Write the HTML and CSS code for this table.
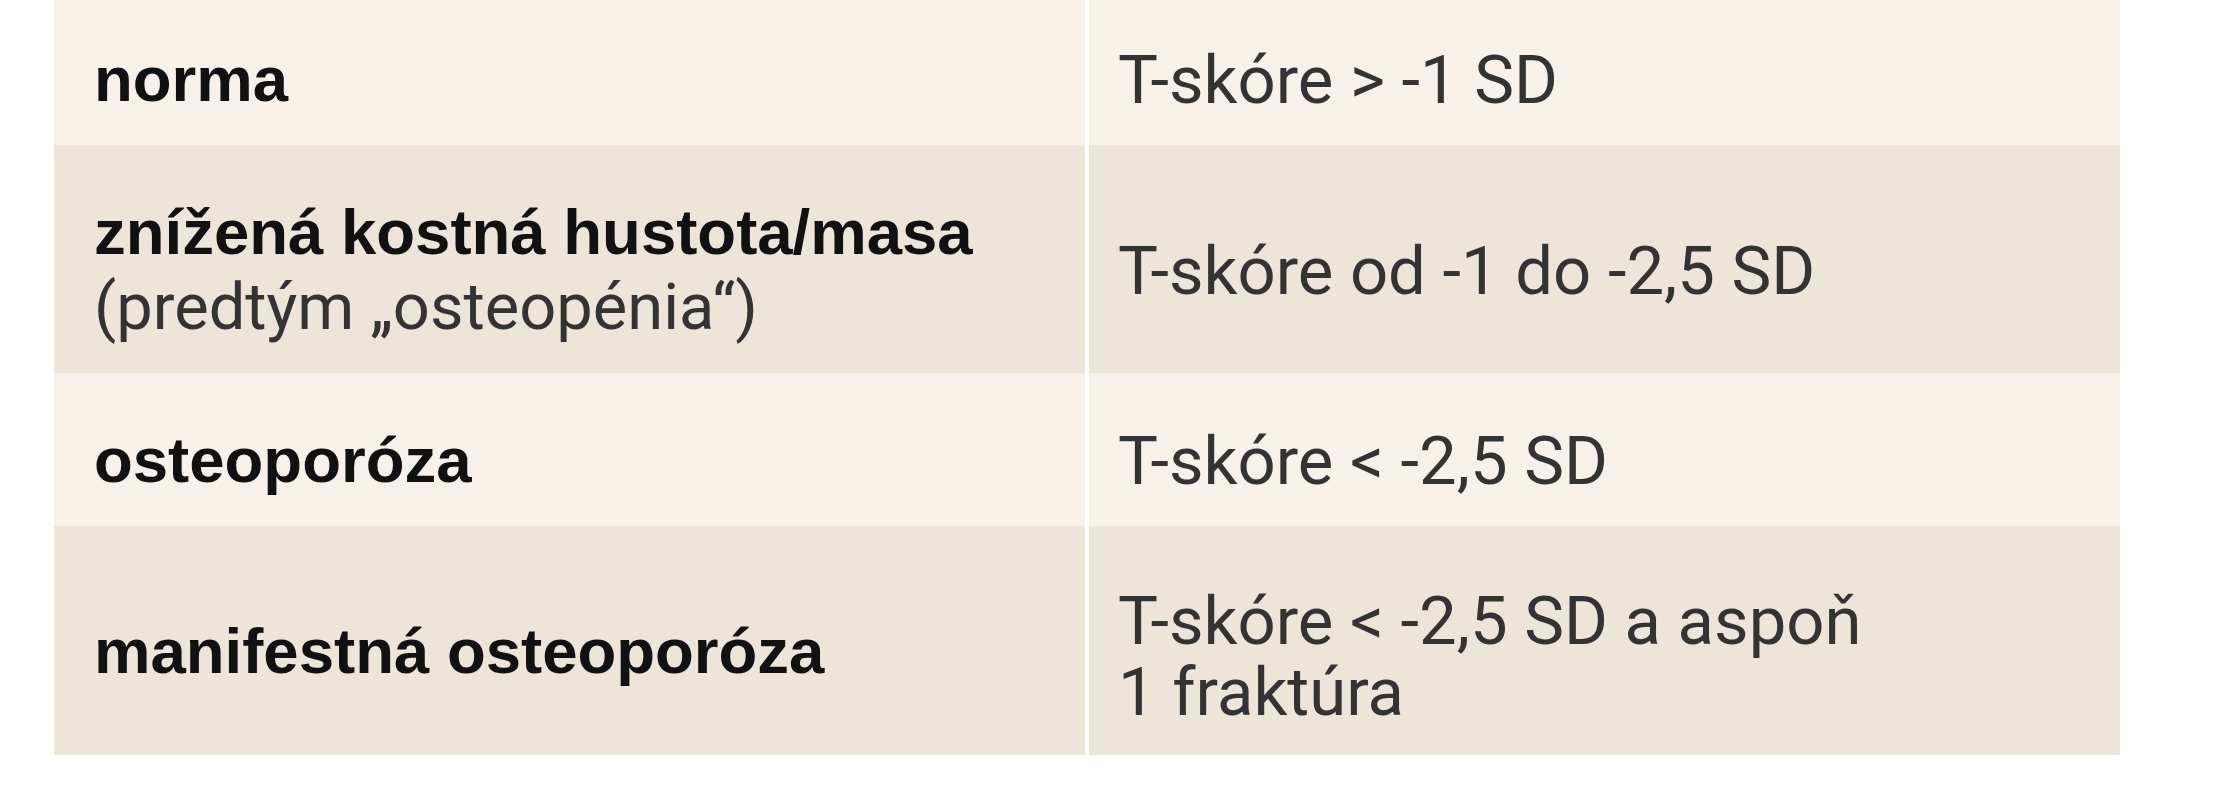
FILE: index.html
```html
<!DOCTYPE html>
<html lang="sk">
<head>
<meta charset="utf-8">
<title>Osteoporóza – T-skóre</title>
<link rel="stylesheet" href="styles.css">
</head>
<body>
<div class="table">
  <div class="cell light term"><div><strong>norma</strong></div></div>
  <div class="cell light value"><div>T-skóre &gt; -1 SD</div></div>

  <div class="cell dark term"><div><strong>znížená kostná hustota/masa</strong><br>(predtým „osteopénia“)</div></div>
  <div class="cell dark value"><div>T-skóre od -1 do -2,5 SD</div></div>

  <div class="cell light term"><div><strong>osteoporóza</strong></div></div>
  <div class="cell light value"><div>T-skóre &lt; -2,5 SD</div></div>

  <div class="cell dark term"><div><strong>manifestná osteoporóza</strong></div></div>
  <div class="cell dark value multi"><div>T-skóre &lt; -2,5 SD a aspoň<br>1 fraktúra</div></div>
</div>
</body>
</html>
```

FILE: styles.css
```css
html, body {
  margin: 0;
  padding: 0;
  background: #ffffff;
}

body {
  font-family: Roboto, "Liberation Sans", sans-serif;
  font-size: 65px;
  line-height: 75px;
  color: #333333;
}

.table {
  margin: -8px 0 0 54px;
  width: 2066px;
  display: grid;
  grid-template-columns: 1fr 1fr;
  column-gap: 4px;
}

.cell {
  padding: 50px 40px 28px 40px;
  display: flex;
  flex-direction: column;
  justify-content: center;
}

.cell.value {
  padding: 51px 40px 27px 29px;
  font-size: 67px;
  line-height: 71px;
}

.cell.value.multi {
  padding-top: 60px;
  padding-bottom: 27px;
}

.light {
  background: #f8f1e9;
}

.dark {
  background: #ede5d7;
}

.term strong {
  font-family: "Liberation Sans", Arial, sans-serif;
  font-size: 63.5px;
  font-weight: 700;
  color: #111111;
}
```
